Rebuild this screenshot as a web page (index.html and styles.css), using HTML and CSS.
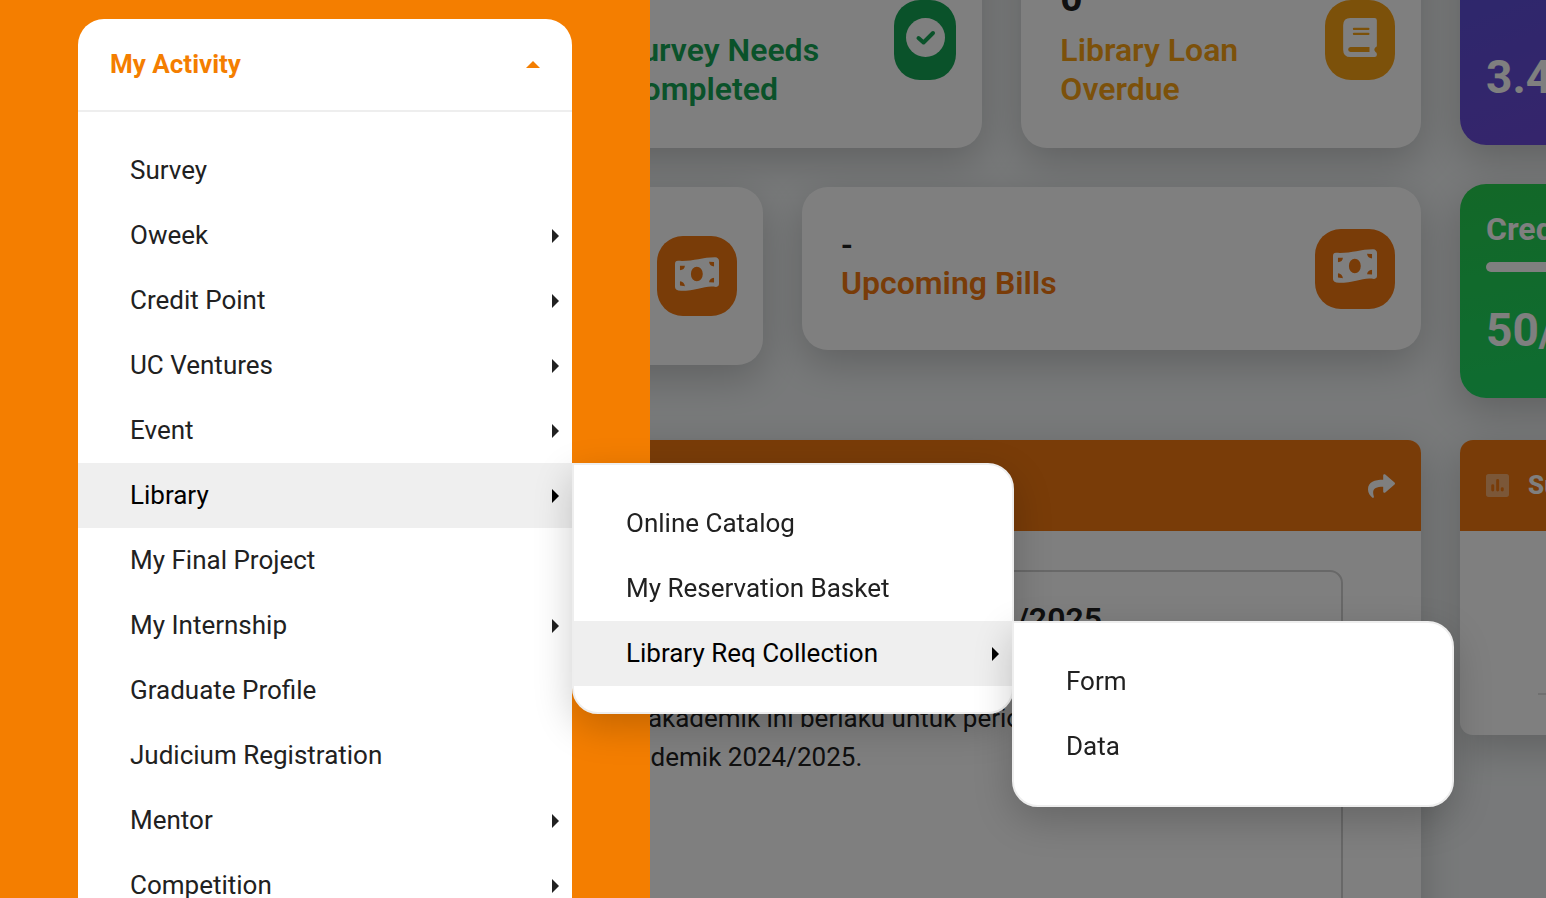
FILE: index.html
```html
<!DOCTYPE html>
<html lang="en">
<head>
<meta charset="utf-8">
<meta name="viewport" content="width=device-width, initial-scale=1">
<title>My Activity</title>
<link rel="stylesheet" href="styles.css">
</head>
<body>
<svg class="sprite" aria-hidden="true">
  <symbol id="money" viewBox="0 0 133 102">
    <path fill-rule="evenodd" d="M0 21Q0 11 9 11C52 14 80 0 121 0Q133 1 133 12V80Q133 90 124 90C90 84 68 102 18 102Q0 101 0 90ZM15 26V40Q29 38 30 26ZM15 73V86L30 88Q28 75 15 73ZM103 14Q105 28 118 28V15ZM118 62Q104 64 103 76L118 77ZM66 29A18 22 0 1 0 66 73A18 22 0 1 0 66 29Z"/>
  </symbol>
</svg>

<main class="dashboard">
  <div class="column">
    <div class="stats three">
      <article class="card stat"></article>
      <article class="card stat survey">
        <div><p class="count">0</p><h2 class="label">Survey Needs Completed</h2></div>
        <span class="badge">
          <svg width="39" height="39" viewBox="0 0 39 39"><circle cx="19.5" cy="19.5" r="19.5" fill="#fff"/><path class="tick" d="M12.500 20L17.500 24.500L27 15"/></svg>
        </span>
      </article>
      <article class="card stat loan">
        <div><p class="count">0</p><h2 class="label">Library Loan Overdue</h2></div>
        <span class="badge">
          <svg width="34" height="39" viewBox="0 0 101 117"><path fill="#fff" fill-rule="evenodd" d="M22 0H94Q101 0 101 7V83Q101 87 97 88Q90 95 97 102Q101 103 101 108V111Q101 117 94 117H22Q0 117 0 95V22Q0 0 22 0ZM32 29Q29 29 29 32.500T32 36H76Q79 36 79 32.500T76 29ZM32 44Q29 44 29 47.500T32 51H76Q79 51 79 47.500T76 44ZM22 87Q15 88 15 94.500T22 102H79V87Z"/></svg>
        </span>
      </article>
    </div>
    <div class="stats two">
      <article class="card stat bill tall">
        <span class="badge"><svg width="44" height="34"><use href="#money"/></svg></span>
      </article>
      <article class="card stat bill">
        <div><p class="count">-</p><h2 class="label">Upcoming Bills</h2></div>
        <span class="badge"><svg width="44" height="34"><use href="#money"/></svg></span>
      </article>
    </div>
    <section class="panel news">
      <header class="panel-head">
        <button class="share" type="button" aria-label="Share">
          <svg width="27" height="24" viewBox="0 32 512 448"><path fill="#fff" d="M503.691 189.836L327.687 37.851C312.281 24.546 288 35.347 288 56.015v80.053C127.371 137.907 0 170.100 0 322.326c0 61.441 39.581 122.309 83.333 154.132 13.653 9.931 33.111-2.533 28.077-18.631C66.066 312.814 132.917 274.316 288 272.085V360c0 20.700 24.300 31.453 39.687 18.164l176.004-152c11.071-9.562 11.086-26.753 0-36.328z"/></svg>
        </button>
      </header>
      <div class="notice">
        <h3>Tahun Akademik 2024/2025</h3>
        <p>Periode akademik ini berlaku untuk periode<br>bagi akademik 2024/2025.</p>
      </div>
    </section>
  </div>

  <aside class="column">
    <article class="score gpa"><p class="value">3.4</p></article>
    <article class="score credit">
      <h2>Credit</h2>
      <div class="bar"></div>
      <p class="value">50/</p>
    </article>
    <section class="panel summary">
      <header class="panel-head">
        <svg class="chart" width="23" height="23" viewBox="0 0 70 70"><path fill="#fff" fill-rule="evenodd" d="M8 0H62Q70 0 70 8V62Q70 70 62 70H8Q0 70 0 62V8Q0 0 8 0ZM16 35V49Q16 53 20.500 53T25 49V35Q25 31 20.500 31T16 35ZM31 19V49Q31 53 35.500 53T40 49V19Q40 15 35.500 15T31 19ZM45 44V49Q45 53 49.500 53T54 49V44Q54 40 49.500 40T45 44Z"/></svg>
        <h2>Summary</h2>
      </header>
      <div class="plot"><hr></div>
    </section>
  </aside>
</main>

<div class="overlay"></div>

<nav class="drawer" aria-label="My Activity">
  <div class="menu">
    <button class="menu-head" type="button" aria-expanded="true">My Activity<span class="caret-up"></span></button>
    <ul class="list">
      <li><a href="#survey">Survey</a></li>
      <li><a class="more" href="#oweek">Oweek</a></li>
      <li><a class="more" href="#credit-point">Credit Point</a></li>
      <li><a class="more" href="#ventures">UC Ventures</a></li>
      <li><a class="more" href="#event">Event</a></li>
      <li>
        <a class="more active" href="#library">Library</a>
        <ul class="list submenu">
          <li><a href="#catalog">Online Catalog</a></li>
          <li><a href="#basket">My Reservation Basket</a></li>
          <li>
            <a class="more active" href="#collection">Library Req Collection</a>
            <ul class="list submenu">
              <li><a href="#form">Form</a></li>
              <li><a href="#data">Data</a></li>
            </ul>
          </li>
        </ul>
      </li>
      <li><a href="#final-project">My Final Project</a></li>
      <li><a class="more" href="#internship">My Internship</a></li>
      <li><a href="#graduate">Graduate Profile</a></li>
      <li><a href="#judicium">Judicium Registration</a></li>
      <li><a class="more" href="#mentor">Mentor</a></li>
      <li><a class="more" href="#competition">Competition</a></li>
    </ul>
  </div>
</nav>
</body>
</html>
```

FILE: styles.css
```css
* { box-sizing: border-box; }

body {
  margin: 0;
  height: 100vh;
  overflow: hidden;
  background: #f0f3f4;
  color: #212121;
  font: 26px/39px Roboto, "Liberation Sans", sans-serif;
}

h2, h3, p, ul { margin: 0; padding: 0; }
button { border: 0; background: none; font: inherit; cursor: pointer; }
.sprite { position: absolute; width: 0; height: 0; }

/* Dashboard, scrolled a little and running past the right edge */
.dashboard {
  display: grid;
  grid-template-columns: minmax(0, 1fr) 400px;
  gap: 39px;
  margin: -68px -314px 0 0;
  padding-left: 144px;
}
.column { display: flex; flex-direction: column; gap: 39px; }
.stats { display: grid; gap: 39px; align-items: start; }
.three { grid-template-columns: repeat(3, minmax(0, 1fr)); }
.two { grid-template-columns: repeat(2, minmax(0, 1fr)); }

.card, .score, .panel { box-shadow: 0 13px 39px rgba(0, 0, 0, .2); }
.card { border-radius: 26px; background: #fff; }
.stat {
  display: flex;
  align-items: center;
  justify-content: space-between;
  gap: 26px;
  padding: 39px 26px 39px 39px;
}
.label { font-size: 32px; line-height: 39px; font-weight: 600; }
.count { margin-bottom: 6px; font-size: 39px; line-height: 54px; font-weight: 700; }
.badge {
  display: flex;
  flex: none;
  align-items: center;
  justify-content: center;
  width: 80px;
  height: 80px;
  padding-bottom: 5px;
  border-radius: 26px;
}
.badge svg { fill: #fff; }
.survey .label { color: #14a455; }
.survey .badge { width: 62px; background: #14a455; }
.tick { fill: none; stroke: #14a455; stroke-width: 4; stroke-linecap: round; stroke-linejoin: round; }
.loan .label { color: #f9a215; }
.loan .badge { width: 70px; background: #f9a215; }
.bill .label { margin-bottom: 8px; color: #f27810; }
.bill .badge { background: #f27810; }
.bill .count { margin-bottom: 0; font-size: 32px; line-height: 38px; font-weight: 600; }
.tall { justify-content: flex-end; min-height: 178px; }

.panel { border-radius: 13px; background: #fff; overflow: hidden; }
.panel-head {
  display: flex;
  align-items: center;
  gap: 19px;
  height: 91px;
  padding: 0 26px;
  background: #f27810;
  color: #fff;
}
.panel-head h2 { font-size: 26px; font-weight: 800; }
.news { margin-top: 36px; min-height: 560px; }
.share { display: flex; margin-left: auto; padding: 0; }
.notice {
  margin: 39px 78px;
  padding: 28px 239px 0 329px;
  min-height: 420px;
  border: 2px solid #d0d0d0;
  border-radius: 13px;
}
.notice h3 { font-size: 32px; font-weight: 600; text-align: right; white-space: nowrap; }
.notice p { margin-top: 60px; white-space: nowrap; }

.score { border-radius: 26px; color: #fff; }
.score h2 { font-size: 32px; line-height: 38px; font-weight: 700; }
.value { font-size: 46px; line-height: 54px; font-weight: 700; }
.gpa {
  display: flex;
  align-items: flex-end;
  min-height: 213px;
  padding: 26px 26px 41px;
  background: linear-gradient(160deg, #5850d8, #7448d8);
}
.credit { padding: 26px 26px 41px; background: linear-gradient(170deg, #26d050, #1cdc68); }
.bar { height: 10px; margin: 14px 0 31px; border-radius: 5px; background: #fff; }
.summary { margin-top: 3px; min-height: 295px; }
.chart { opacity: .4; }
.plot { padding: 162px 26px 39px 78px; }
.plot hr { margin: 0; border: 0; border-top: 2px solid #e0e0e0; }

.overlay { position: fixed; inset: 0; background: rgba(0, 0, 0, .5); }

/* Navigation drawer */
.drawer {
  position: fixed;
  inset: 0 auto 0 0;
  width: 650px;
  padding: 19px 78px 0;
  background: #f47e00;
}
.menu { border-radius: 26px 26px 0 0; background: #fff; }
.menu-head {
  display: flex;
  align-items: center;
  justify-content: space-between;
  width: 100%;
  height: 93px;
  padding: 0 32px;
  border-bottom: 2px solid #eee;
  color: #f47e00;
  font-weight: 700;
}
.caret-up {
  border: 7px solid transparent;
  border-top: 0;
  border-bottom-color: #f47e00;
}
.list { padding: 26px 0; list-style: none; }
.list li { position: relative; }
.list a {
  display: flex;
  align-items: center;
  justify-content: space-between;
  height: 65px;
  padding: 0 13px 0 52px;
  color: #212121;
  text-decoration: none;
}
.list .more::after {
  content: "";
  border: 7px solid transparent;
  border-right: 0;
  border-left-color: currentColor;
}
.list .active { background: #efefef; color: #000; }
.submenu {
  position: absolute;
  top: 0;
  left: 100%;
  z-index: 1;
  width: 442px;
  border: 2px solid #eee;
  border-radius: 0 26px 26px 26px;
  background: #fff;
  box-shadow: 0 13px 39px rgba(0, 0, 0, .2);
}
```
